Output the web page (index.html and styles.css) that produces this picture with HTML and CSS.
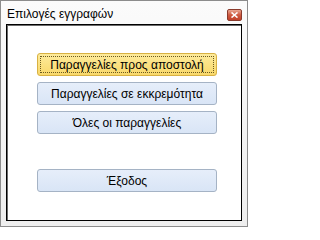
FILE: index.html
```html
<!DOCTYPE html>
<html>
<head>
<meta charset="utf-8">
<link rel="stylesheet" href="styles.css">
</head>
<body>
<div class="window">
  <div class="titlebar">
    <span class="title">Επιλογές εγγραφών</span>
    <span class="close"><svg width="7" height="6" viewBox="0 0 7 6"><path d="M0.5 0.5 L6.5 5.5 M6.5 0.5 L0.5 5.5" stroke="#fff" stroke-width="1.6"/></svg></span>
  </div>
  <div class="panel">
    <div class="btn default"><span class="focus">Παραγγελίες προς αποστολή</span></div>
    <div class="btn">Παραγγελίες σε εκκρεμότητα</div>
    <div class="btn">Όλες οι παραγγελίες</div>
    <div class="btn exit">Έξοδος</div>
  </div>
</div>
</body>
</html>
```

FILE: styles.css
```css
html, body {
  margin: 0;
  padding: 0;
  width: 248px;
  height: 227px;
  overflow: hidden;
  background: #ffffff;
}
.window {
  box-sizing: border-box;
  width: 248px;
  height: 227px;
  border: 1px solid #8c8c8c;
  background: linear-gradient(to bottom, #fbfbfb, #eeeeee);
  padding: 0 5px 5px 5px;
  display: flex;
  flex-direction: column;
  font-family: "Liberation Sans", Arial, sans-serif;
}
.titlebar {
  height: 23px;
  display: flex;
  align-items: flex-start;
  justify-content: space-between;
  flex: none;
}
.title {
  font-size: 12px;
  color: #000;
  margin-top: 6px;
  margin-left: 1px;
}
.close {
  margin-top: 8px;
  margin-right: 0px;
  width: 15px;
  height: 12px;
  box-sizing: border-box;
  border: 1px solid #8a3a2c;
  border-radius: 2px;
  background: linear-gradient(to bottom, #e9a793, #cf5a40 50%, #c1412a);
  display: flex;
  align-items: center;
  justify-content: center;
}
.close svg { display: block; }
.panel {
  flex: 1;
  background: #ffffff;
  border: 1px solid #000;
  box-shadow: inset 1px 1px 0 #6a6a6a;
  padding: 28px 0 0 30px;
  display: flex;
  flex-direction: column;
  gap: 6px;
}
.btn {
  box-sizing: border-box;
  width: 180px;
  height: 23px;
  border: 1px solid #a5b3c5;
  border-radius: 3px;
  background: linear-gradient(to bottom, #e6eefa, #d9e5f6);
  font-size: 12px;
  color: #000;
  display: flex;
  align-items: center;
  justify-content: center;
}
.btn.default {
  border-color: #d8b143;
  background: linear-gradient(to bottom, #fdeb9b, #f9d86a);
  padding: 2px;
}
.btn .focus {
  flex: 1;
  align-self: stretch;
  border: 1px dotted #6b5a20;
  display: flex;
  align-items: center;
  justify-content: center;
}
.btn.exit {
  margin-top: 29px;
}
```
